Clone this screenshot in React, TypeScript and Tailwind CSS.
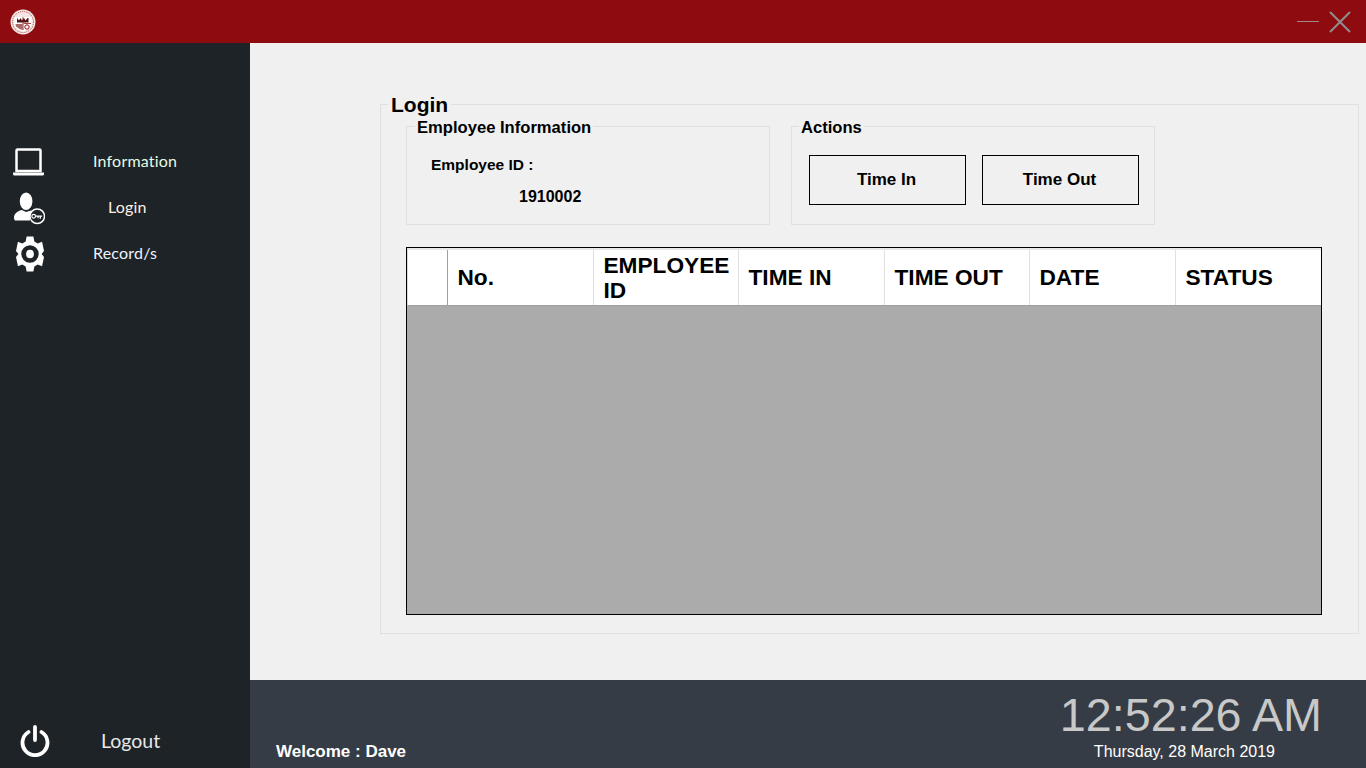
import React from 'react';

const sans = "font-['Liberation_Sans',Arial,sans-serif]";
const gothic = "font-['Lato','Open_Sans',sans-serif]";

const columns = ['No.', 'EMPLOYEE ID', 'TIME IN', 'TIME OUT', 'DATE', 'STATUS'];

function Logo() {
  return (
    <svg width="26" height="26" viewBox="0 0 26 26">
      <circle cx="13" cy="13" r="12.5" fill="#f3e6e4" />
      <circle cx="13" cy="13" r="10.500" fill="none" stroke="#8e0c10" strokeWidth="0.7" strokeDasharray="1 1" />
      <path d="M4.500 8h17v7c0 4-4 6-8.500 7.500C8.500 21 4.500 19 4.500 15z" fill="#fff" />
      <path d="M7 9l2 2.500 1.500-2.500 1.500 2.500 2-2.500 1.500 2.500 2-2.500 1 0v4.500H7z" fill="#4a1414" />
      <path d="M5.500 15h7v6l-3-1-3.500-2.500z" fill="#a86a68" />
      <path d="M13 14h8v0.800h-8zM12.600 8v13h0.800V8z" fill="#8e0c10" />
      <circle cx="17" cy="18" r="2.200" fill="none" stroke="#8e0c10" strokeWidth="1" />
    </svg>
  );
}

function LaptopIcon() {
  return (
    <svg className="mr-[2px]" width="31" height="28" viewBox="0 0 31 28" fill="none">
      <path d="M4.500 1.500h22a1 1 0 0 1 1 1V23h-24V2.500a1 1 0 0 1 1-1z" stroke="#fff" strokeWidth="2.500" />
      <path d="M0 24.500h31v1.500a1.500 1.500 0 0 1-1.500 1.500h-28A1.500 1.500 0 0 1 0 26z" fill="#fff" />
    </svg>
  );
}

function UserKeyIcon() {
  return (
    <svg className="ml-[1px]" width="31" height="33" viewBox="0 0 32 33">
      <ellipse cx="12.500" cy="9" rx="6.500" ry="9" fill="#fff" />
      <path d="M0 26c0-4 3-6.500 8-8l4.500 2 5-1.500c1 0.500 2 1 3 1.500A9 9 0 0 0 16.500 29H2C0.500 29 0 27.500 0 26z" fill="#fff" />
      <circle cx="24" cy="24.500" r="7.500" fill="#1e2328" stroke="#fff" strokeWidth="1.500" />
      <circle cx="20.300" cy="24.500" r="1.900" fill="none" stroke="#fff" strokeWidth="1.200" />
      <path d="M22 23.800h7v1.300h-1.200v2h-1.300v-2h-1v1.500h-1.300v-1.500H22z" fill="#fff" />
    </svg>
  );
}

function GearIcon() {
  return (
    <svg className="ml-[1px]" width="28" height="36" viewBox="0 0 29 36">
      <path
        fillRule="evenodd"
        fill="#fff"
        d="M11 0h7l1 5 3.500 2 4.500-1.800 2 9.800-2.500 3 2.500 3-2 9.800-4.500-1.800-3.500 2-1 5h-7l-1-5-3.500-2-4.500 1.800-2-9.800 2.500-3-2.500-3 2-9.800 4.500 1.800 3.500-2z M14.500 9a9 9 0 1 0 0 18a9 9 0 1 0 0-18z"
      />
      <ellipse cx="14.500" cy="18" rx="4" ry="4.500" fill="#fff" />
    </svg>
  );
}

function PowerIcon() {
  return (
    <svg width="30" height="32" viewBox="0 0 30 32" fill="none" stroke="#fff" strokeWidth="3.800" strokeLinecap="round">
      <path d="M15 2v13" />
      <path d="M8.500 7a12.500 12.500 0 1 0 13 0" />
    </svg>
  );
}

function NavItem({ icon, label, textClass }: { icon: React.ReactNode; label: string; textClass: string }) {
  return (
    <div className="flex h-[46px] items-center">
      <div className="flex w-[59px] justify-center pr-[1px]">{icon}</div>
      <span className={`${gothic} pb-[2px] text-[16px] tracking-[0.2px] ${textClass}`}>{label}</span>
    </div>
  );
}

export default function App() {
  return (
    <div className={`flex h-[768px] w-[1366px] flex-col overflow-hidden bg-[#f0f0f0] ${sans}`}>
      <header className="flex h-[43px] shrink-0 items-center justify-between bg-[#8e0c10] pl-[10px] pr-[14px]">
        <Logo />
        <div className="flex items-center gap-[9px]">
          <div className="h-[1px] w-[22px] bg-[#a38a8a]" />
          <svg width="24" height="24" viewBox="0 0 24 24" stroke="#8f8f8f" strokeWidth="2">
            <path d="M2 2l20 20M22 2L2 22" />
          </svg>
        </div>
      </header>

      <div className="flex min-h-0 flex-1">
        <aside className="flex w-[250px] shrink-0 flex-col justify-between bg-[#1e2328] pt-[96px] text-white">
          <nav>
            <NavItem icon={<LaptopIcon />} label="Information" textClass="ml-[34px] text-[#e4fbe4]" />
            <NavItem icon={<UserKeyIcon />} label="Login" textClass="ml-[49px] text-[#fdf0e0]" />
            <NavItem icon={<GearIcon />} label="Record/s" textClass="ml-[34px] text-[#eef4ff]" />
          </nav>
          <div className="flex h-[54px] items-center pb-[1px] pl-[20px]">
            <PowerIcon />
            <span className={`${gothic} ml-[51px] text-[19.500px] leading-[26px] text-[#e8e8e8]`}>Logout</span>
          </div>
        </aside>

        <div className="flex min-w-0 flex-1 flex-col">
          <main className="flex-1 pl-[130px] pr-[7px] pt-[50px]">
            <fieldset className="h-[541px] border border-[#e0e0e0] px-[25px]">
              <legend className="ml-[-18px] px-[3px] pt-[2px] text-[21px] font-bold leading-[20px] text-black">Login</legend>
              <div className="flex gap-[21px]">
                <fieldset className="h-[110px] w-[364px] border border-[#e0e0e0]">
                  <legend className="ml-[8px] px-[2px] pt-[4px] text-[16.600px] font-bold leading-[18px] text-black">
                    Employee Information
                  </legend>
                  <p className="ml-[24px] mt-[19px] text-[15.500px] font-bold leading-[18px] text-black">Employee ID :</p>
                  <p className="ml-[112px] mt-[14px] text-[16px] font-bold leading-[18px] text-black">1910002</p>
                </fieldset>
                <fieldset className="h-[110px] w-[364px] border border-[#e0e0e0]">
                  <legend className="ml-[7px] px-[2px] pt-[4px] text-[16.600px] font-bold leading-[18px] text-black">Actions</legend>
                  <div className="ml-[17px] mt-[18px] flex gap-[16px]">
                    <button className="h-[50px] w-[157px] border border-black pr-[2px] text-[17px] font-bold text-black">Time In</button>
                    <button className="h-[50px] w-[157px] border border-black pr-[2px] text-[17px] font-bold text-black">Time Out</button>
                  </div>
                </fieldset>
              </div>

              <div className="mt-[22px] flex h-[368px] w-[916px] flex-col border border-black bg-[#ababab]">
                <div className="grid h-[58px] grid-cols-[40px_146px_145px_146px_145px_146px_145px] border-b border-l border-[#a0a0a0] border-l-[#d8d8d8] border-t-2 border-t-[#e8e8e8] bg-white">
                  <div className="border-r border-[#a0a0a0]" />
                  {columns.map((col, i) => (
                    <div
                      key={col}
                      className={`flex items-center pl-[9.500px] pr-[4px] text-[22.670px] font-bold leading-[25px] text-black ${i < 5 ? 'border-r border-[#e0e0e0]' : ''}`}
                    >
                      {col}
                    </div>
                  ))}
                </div>
              </div>
            </fieldset>
          </main>

          <footer className="flex h-[88px] shrink-0 items-end justify-between bg-[#363c45] pl-[26px] pr-[44px]">
            <span className="pb-[4px] text-[17px] font-bold text-white">Welcome : Dave</span>
            <div className="flex flex-col items-end">
              <span className="text-[46.700px] leading-[54px] text-[#c8c8c8]">12:52:26 AM</span>
              <span className="pb-[6px] pr-[47px] text-[16px] leading-[20px] text-white">Thursday, 28 March 2019</span>
            </div>
          </footer>
        </div>
      </div>
    </div>
  );
}
